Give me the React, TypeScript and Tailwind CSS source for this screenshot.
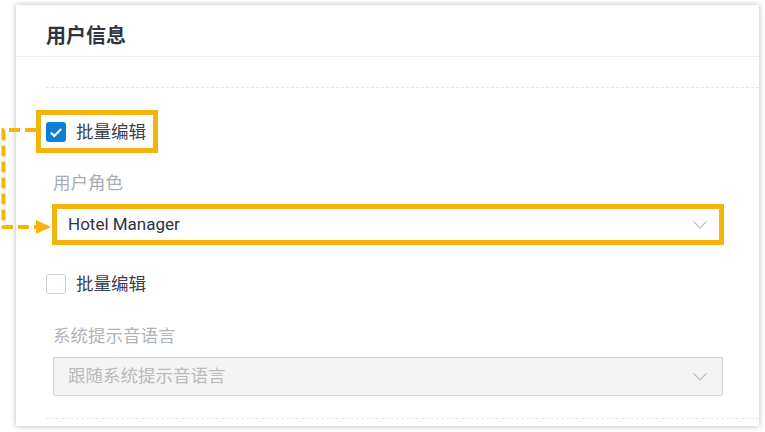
import React from 'react';

const font = { fontFamily: 'Roboto, "Noto Sans CJK SC", sans-serif' };

// Thin chevron used by both selects
function Chevron() {
  return (
    <svg width="14" height="8" viewBox="0 0 14 8" className="shrink-0">
      <path d="M0.5 0.5 L7 7 L13.5 0.5" fill="none" stroke="#bfbfc4" strokeWidth="1.2" />
    </svg>
  );
}

function Checkbox({ checked }: { checked: boolean }) {
  return checked ? (
    <span className="flex h-[20px] w-[20px] items-center justify-center rounded-[3px] bg-[#0b80d6]">
      <svg width="14" height="11" viewBox="0 0 14 11">
        <path d="M1.8 5.6 L5.3 9 L12.2 2" fill="none" stroke="#fff" strokeWidth="2.2" />
      </svg>
    </span>
  ) : (
    <span className="h-[20px] w-[20px] rounded-[3px] border border-[#cfd1d8] bg-white" />
  );
}

export default function App() {
  return (
    <div className="relative h-[432px] w-[765px] bg-white pt-[5px]" style={font}>
      {/* Card */}
      <div className="ml-4 h-[421px] w-[743px] bg-white shadow-[0_0_6px_rgba(0,0,0,0.28)]">
        {/* Header */}
        <div className="h-[52px] border-b border-[#efeff1] pl-[30px] pt-[19px]">
          <h2 className="text-[20px] font-bold leading-[24px] text-[#2e3441]">用户信息</h2>
        </div>

        <div className="mt-[30px] pl-[30px]">
          <div className="border-t border-dashed border-[#e6e7ea]" />

          {/* Batch edit: role */}
          <div className="relative mt-[32px] flex h-[24px] items-center gap-[10px]">
            <Checkbox checked />
            <span className="text-[17.5px] text-[#3b4150]">批量编辑</span>
            <div className="pointer-events-none absolute left-[-10px] top-[-10px] h-[43px] w-[122px] border-[5px] border-[#f5b40b]" />
          </div>

          <div className="pl-[7px] pr-[36px]">
            <div className="mt-[27px] h-[24px] text-[17.5px] leading-[24px] text-[#a9acb6]">用户角色</div>
            <div className="relative mt-[10px] flex h-[40px] items-center justify-between border border-[#d5d7de] bg-white pl-[14px] pr-[15px]">
              <span className="text-[17px] text-[#2b3344]">Hotel Manager</span>
              <Chevron />
              <div className="pointer-events-none absolute left-[-2px] right-[-2px] top-[-2px] bottom-[-1px] border-[5px] border-[#f5b40b]" />
            </div>
          </div>

          {/* Batch edit: prompt language */}
          <div className="mt-[27px] flex h-[24px] items-center gap-[10px]">
            <Checkbox checked={false} />
            <span className="text-[17.5px] text-[#3b4150]">批量编辑</span>
          </div>

          <div className="pl-[7px] pr-[36px]">
            <div className="mt-[28px] h-[24px] text-[17.5px] leading-[24px] text-[#b1b3bb]">系统提示音语言</div>
            <div className="mt-[9px] flex h-[39px] items-center justify-between rounded-[2px] border border-[#d3d5dd] bg-[#f4f4f5] pl-[14px] pr-[15px]">
              <span className="text-[17.5px] text-[#bababa]">跟随系统提示音语言</span>
              <Chevron />
            </div>
          </div>

          <div className="mt-[22px] border-t border-dashed border-[#e6e7ea]" />
        </div>
      </div>

      {/* Annotation connector */}
      <svg className="pointer-events-none absolute left-0 top-0" width="60" height="240">
        <path d="M36 130 H3.5 V227 H37" fill="none" stroke="#f5b40b" strokeWidth="4" strokeDasharray="11 5" />
        <polygon points="36,220 51,227 36,234" fill="#f5b40b" />
      </svg>
    </div>
  );
}
